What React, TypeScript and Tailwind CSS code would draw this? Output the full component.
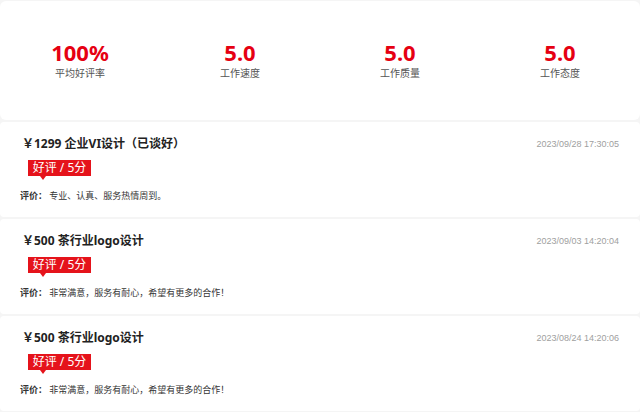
import React from "react";

const stats = [
  { v: "100%", l: "平均好评率" },
  { v: "5.0", l: "工作速度" },
  { v: "5.0", l: "工作质量" },
  { v: "5.0", l: "工作态度" },
];

const reviews = [
  { t: "￥1299 企业VI设计（已谈好）", d: "2023/09/28 17:30:05", c: "专业、认真、服务热情周到。" },
  { t: "￥500 茶行业logo设计", d: "2023/09/03 14:20:04", c: "非常满意，服务有耐心，希望有更多的合作！" },
  { t: "￥500 茶行业logo设计", d: "2023/08/24 14:20:06", c: "非常满意，服务有耐心，希望有更多的合作！" },
];

export default function App() {
  return (
    <div
      className="w-[640px] h-[412px] overflow-hidden bg-[#f5f5f5] flex flex-col gap-[2px] pt-[1px]"
      style={{ fontFamily: '"Noto Sans", "Noto Sans CJK SC", sans-serif' }}
    >
      <div className="h-[119px] shrink-0 bg-white rounded-[6px] grid grid-cols-4 items-center">
        {stats.map((s, i) => (
          <div key={i} className="flex flex-col items-center -mt-[2px]">
            <div className="text-[22px] leading-[24px] font-bold text-[#e60012]">{s.v}</div>
            <div className="text-[10px] leading-[13px] text-[#555] mt-[3px]">{s.l}</div>
          </div>
        ))}
      </div>
      {reviews.map((r, i) => (
        <div key={i} className="h-[95px] shrink-0 bg-white rounded-[4px] pl-[22px] pr-[21px] pt-[14px] relative">
          <div className="flex justify-between items-center">
            <div className="text-[12px] leading-[16px] font-bold text-[#222]">{r.t}</div>
            <div
              className="text-[9px] leading-[14px] text-[#a0a0a0]"
              style={{ fontFamily: '"Liberation Sans", sans-serif' }}
            >
              {r.d}
            </div>
          </div>
          <div className="mt-[8px] ml-[6px] relative w-fit">
            <div className="bg-[#e5131b] text-white text-[12px] leading-[16px] w-[63px] h-[16px] flex items-center justify-center">
              好评 / 5分
            </div>
            <div className="absolute left-[12px] top-[16px] w-0 h-0 border-l-[3px] border-r-[3px] border-t-[4px] border-l-transparent border-r-transparent border-t-[#e5131b]" />
          </div>
          <div className="mt-[13px] -ml-[2px] text-[9px] leading-[14px] text-[#333]">
            <span className="font-bold">评价：</span> {r.c}
          </div>
        </div>
      ))}
    </div>
  );
}
